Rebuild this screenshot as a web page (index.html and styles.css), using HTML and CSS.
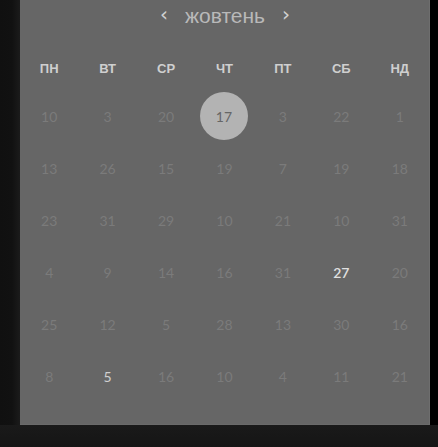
FILE: index.html
```html
<!DOCTYPE html>
<html lang="uk">
<head>
<meta charset="utf-8">
<link rel="stylesheet" href="styles.css">
</head>
<body>
<div class="page">
  <div class="stage">
    <div class="gutter"></div>
    <div class="card">
      <div class="month">
        <span class="chev">‹</span>
        <span class="title">жовтень</span>
        <span class="chev">›</span>
      </div>
      <div class="weekdays">
        <span>ПН</span><span>ВТ</span><span>СР</span><span>ЧТ</span><span>ПТ</span><span>СБ</span><span>НД</span>
      </div>
      <div class="days">
        <span>10</span><span>3</span><span>20</span><span class="sel"><b>17</b></span><span>3</span><span>22</span><span>1</span>
        <span>13</span><span>26</span><span>15</span><span>19</span><span>7</span><span>19</span><span>18</span>
        <span>23</span><span>31</span><span>29</span><span>10</span><span>21</span><span>10</span><span>31</span>
        <span>4</span><span>9</span><span>14</span><span>16</span><span>31</span><span class="hi">27</span><span>20</span>
        <span>25</span><span>12</span><span>5</span><span>28</span><span>13</span><span>30</span><span>16</span>
        <span>8</span><span class="hi2">5</span><span>16</span><span>10</span><span>4</span><span>11</span><span>21</span>
      </div>
    </div>
    <div class="edge"></div>
  </div>
  <div class="footer"></div>
</div>
</body>
</html>
```
FILE: styles.css
```css
html, body {
  margin: 0;
  padding: 0;
  background: #161616;
  width: 438px;
  height: 447px;
  overflow: hidden;
}
.page {
  display: flex;
  flex-direction: column;
  width: 438px;
  height: 447px;
}
.stage {
  display: flex;
  height: 425px;
  background: #111;
}
.gutter {
  width: 20px;
  background: linear-gradient(to right, #101010 0, #111 12px, #1b1b1b 20px);
}
.card {
  width: 410px;
  background: #666;
  border-right: 1px solid #6e6e6e;
  border-bottom: 1px solid #6a6a6a;
  box-sizing: border-box;
  font-family: Lato, "Open Sans", sans-serif;
}
.edge {
  flex: 1;
  background: #000;
}
.footer {
  flex: 1;
  background: linear-gradient(to bottom, #1a1a1a, #151515);
}
.month {
  height: 32px;
  display: flex;
  align-items: center;
  justify-content: center;
  gap: 17px;
  color: #bdbdbd;
  padding-left: 1px;
}
.title {
  font-size: 21px;
  font-family: "Liberation Sans", Arial, sans-serif;
  color: #b9b9b9;
  line-height: 1;
  margin-top: -2px;
}
.chev {
  font-size: 20px;
  line-height: 1;
  color: #d0d0d0;
  margin-top: -5px;
  font-family: "DejaVu Sans", sans-serif;
}
.weekdays {
  margin-top: 20px;
  display: grid;
  grid-template-columns: repeat(7, 1fr);
  height: 32px;
  align-items: center;
  justify-items: center;
  font-family: "Liberation Sans", Arial, sans-serif;
  font-weight: bold;
  font-size: 13px;
  color: #cfcfcf;
}
.days {
  margin-top: 6px;
  display: grid;
  grid-template-columns: repeat(7, 1fr);
  grid-auto-rows: 52px;
  align-items: center;
  justify-items: center;
  font-size: 14px;
  color: #7b7b7b;
}
.days span {
  display: flex;
  align-items: center;
  justify-content: center;
}
.days .sel {
  width: 48px;
  height: 48px;
  border-radius: 50%;
  background: #b3b3b3;
  color: #666;
  margin-left: -1px;
  margin-top: -1px;
}
.days .sel b {
  font-weight: normal;
  margin-top: 2px;
}
.days .hi {
  color: #e0e0e0;
  font-weight: 600;
}
.days .hi2 {
  color: #d0d0d0;
}
```
